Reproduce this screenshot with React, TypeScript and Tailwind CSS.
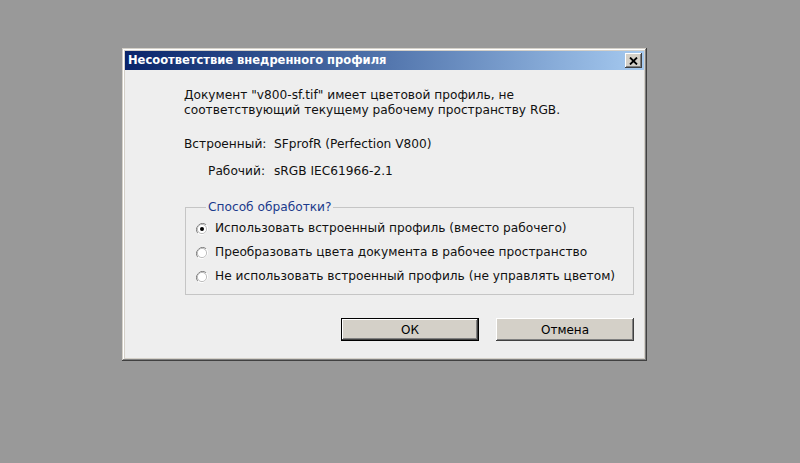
import React from 'react';

const font = { fontFamily: '"DejaVu Sans", Verdana, sans-serif' };

function Radio({ checked }: { checked?: boolean }) {
  return (
    <svg width="12" height="12" viewBox="0 0 12 12" className="shrink-0">
      <path d="M10.2 1.8 A6 6 0 0 0 1.8 10.2" fill="none" stroke="#808080" strokeWidth="1" />
      <path d="M1.8 10.2 A6 6 0 0 0 10.2 1.8" fill="none" stroke="#ffffff" strokeWidth="1" />
      <circle cx="6" cy="6" r="4.6" fill="#ffffff" stroke="#b0b0b0" strokeWidth="0.8" />
      {checked && <circle cx="6" cy="6" r="2" fill="#000000" />}
    </svg>
  );
}

function Button({ label, isDefault }: { label: string; isDefault?: boolean }) {
  return (
    <button
      className={
        'w-[138px] h-[23px] bg-[#d4d0c8] text-[12px] text-black flex items-center justify-center ' +
        (isDefault
          ? 'border border-black shadow-[inset_-1px_-1px_#404040,inset_1px_1px_#ffffff,inset_-2px_-2px_#808080]'
          : 'shadow-[inset_-1px_-1px_#404040,inset_1px_1px_#ffffff,inset_-2px_-2px_#808080,inset_2px_2px_#d4d0c8]')
      }
    >
      {label}
    </button>
  );
}

export default function App() {
  const options = [
    'Использовать встроенный профиль (вместо рабочего)',
    'Преобразовать цвета документа в рабочее пространство',
    'Не использовать встроенный профиль (не управлять цветом)',
  ];

  return (
    <div className="w-[800px] h-[463px] bg-[#999999] pt-[48px] pl-[122px]" style={font}>
      <div className="w-[525px] h-[313px] bg-[#d4d0c8] p-[3px] flex flex-col shadow-[inset_-1px_-1px_#404040,inset_1px_1px_#d4d0c8,inset_-2px_-2px_#808080,inset_2px_2px_#ffffff]">
        {/* title bar */}
        <div className="h-[19px] flex items-center justify-between pl-[3px] pr-[2px] bg-gradient-to-r from-[#0a246a] to-[#a6caf0]">
          <span className="text-white font-bold text-[11.5px] leading-none">Несоответствие внедренного профиля</span>
          <div className="w-[17px] h-[15px] bg-[#d4d0c8] flex items-center justify-center shadow-[inset_-1px_-1px_#404040,inset_1px_1px_#ffffff,inset_-2px_-2px_#808080]">
            <svg width="9" height="8" viewBox="0 0 9 8">
              <path d="M1 0.5 L8 7.5 M8 0.5 L1 7.5" stroke="#000" strokeWidth="1.8" />
            </svg>
          </div>
        </div>

        {/* body */}
        <div className="flex-1 bg-[#eeeeee] pl-[59px] pr-[10px] pt-[18px] text-[12.2px] text-[#111]">
          <p className="leading-[15px]">
            Документ "v800-sf.tif" имеет цветовой профиль, не
            <br />
            соответствующий текущему рабочему пространству RGB.
          </p>

          <div className="mt-[19px] grid grid-cols-[81px_1fr] gap-x-[9px] gap-y-[12px] leading-[15px]">
            <span className="text-right">Встроенный:</span>
            <span>SFprofR (Perfection V800)</span>
            <span className="text-right">Рабочий:</span>
            <span>sRGB IEC61966-2.1</span>
          </div>

          <fieldset className="mt-[21px] ml-[1px] w-[449px] h-[95px] border border-[#c5c5c5] pl-[10px] pt-[6px]">
            <legend className="ml-[10px] px-[2px] text-[#1a3a8c] leading-[15px]">Способ обработки?</legend>
            <div className="flex flex-col gap-[9px]">
              {options.map((o, i) => (
                <div key={o} className="flex items-center gap-[7px] leading-[15px]">
                  <Radio checked={i === 0} />
                  <span>{o}</span>
                </div>
              ))}
            </div>
          </fieldset>

          <div className="mt-[23px] ml-[157px] flex gap-[17px]">
            <Button label="ОК" isDefault />
            <Button label="Отмена" />
          </div>
        </div>
      </div>
    </div>
  );
}
